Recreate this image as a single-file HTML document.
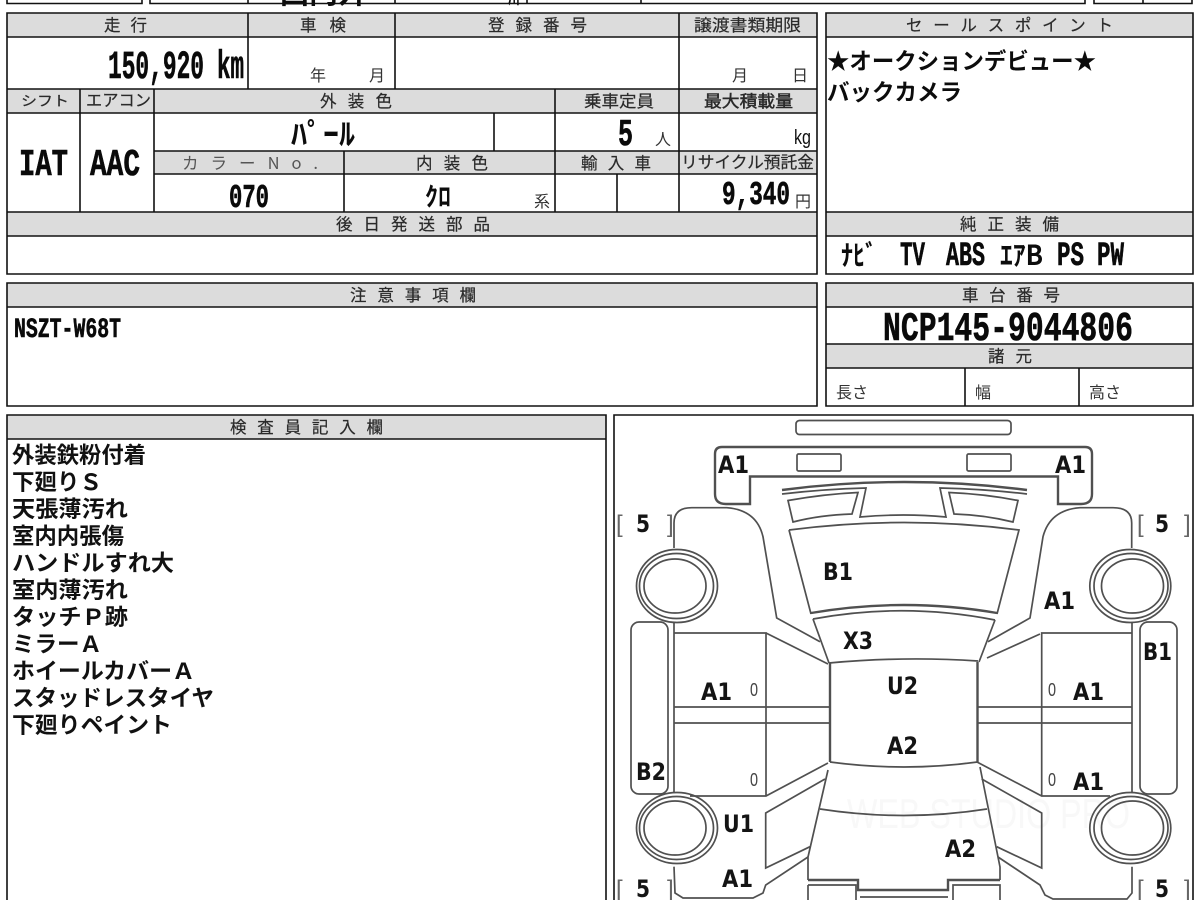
<!DOCTYPE html>
<html lang="ja">
<head>
<meta charset="utf-8">
<title>車両検査票</title>
<style>
html,body{margin:0;padding:0;background:#fff;width:1200px;height:900px;overflow:hidden}
svg{display:block;position:absolute;left:0;top:0;filter:blur(0.3px)}
text{font-family:"Liberation Sans","Noto Sans CJK JP",sans-serif;fill:#111}
.h{font-size:16.5px;fill:#2a2a2a;stroke:#2a2a2a;stroke-width:.2px;font-family:"Noto Sans CJK JP","Liberation Sans",sans-serif}
.t{font-size:16px;fill:#333;font-family:"Noto Sans CJK JP","Liberation Sans",sans-serif}
.b{font-family:"Liberation Mono","Liberation Sans",monospace;font-weight:700;fill:#0a0a0a;stroke:#0a0a0a;stroke-width:.6px}
.j{font-family:"Noto Sans CJK JP","Liberation Sans",sans-serif;font-weight:700;fill:#0c0c0c}
.l{font-family:"DejaVu Sans","Liberation Sans",sans-serif;font-size:24px;font-weight:700;fill:#141414}
.n{font-family:"DejaVu Sans","Liberation Sans",sans-serif;font-size:24px;font-weight:700;fill:#141414}
.z{font-size:18px;fill:#444}
.br{font-size:24px;fill:#666}
.li{font-size:22.5px;font-family:"Noto Sans CJK JP","Liberation Sans",sans-serif;font-weight:700;fill:#111}
.g{fill:#dcdcdc}
.k{fill:none;stroke:#111;stroke-width:1.6}
.d{fill:none;stroke:#505050;stroke-width:1.7}
.d2{fill:none;stroke:#505050;stroke-width:2.4}
</style>
</head>
<body>
<svg width="1200" height="900" viewBox="0 0 1200 900" xmlns="http://www.w3.org/2000/svg">
<!-- grey header bands -->
<rect class="g" x="7" y="13" width="810" height="24"/>
<rect class="g" x="7" y="89" width="810" height="24"/>
<rect class="g" x="154" y="151" width="663" height="23"/>
<rect class="g" x="7" y="212" width="810" height="24"/>
<rect class="g" x="826" y="13" width="367" height="24"/>
<rect class="g" x="826" y="212" width="367" height="24"/>
<rect class="g" x="7" y="283" width="810" height="24"/>
<rect class="g" x="826" y="283" width="367" height="24"/>
<rect class="g" x="826" y="344" width="367" height="24"/>
<rect class="g" x="7" y="415" width="599" height="24"/>

<!-- clipped top strip -->
<text class="j" x="280" y="3" font-size="34" textLength="87" lengthAdjust="spacingAndGlyphs">国内外</text>
<text class="j" x="508" y="3" font-size="24" textLength="12" lengthAdjust="spacingAndGlyphs">川</text>
<path class="k" d="M7 0V3.5H142V0M150 0V3.5H1085V0M248 0V3.5M395 0V3.5M527 0V3.5M641 0V3.5M1094 0V3.5H1192V0M1143 0V3.5" fill="#fff"/>

<!-- main table lines -->
<path class="k" d="M7 13H817V274H7ZM7 37H817M7 89H817M7 113H817M154 151H817M154 174H817M7 212H817M7 236H817
M248 13V89M395 13V89M679 13V212M80 89V212M154 89V212M555 89V212M494 113V151M344 151V212M617 174V212"/>
<path class="k" d="M826 13H1193V274H826ZM826 37H1193M826 212H1193M826 236H1193"/>
<path class="k" d="M7 283H817V406H7ZM7 307H817"/>
<path class="k" d="M826 283H1193V406H826ZM826 307H1193M826 344H1193M826 368H1193M965 368V406M1079 368V406"/>
<path class="k" d="M7 900V415H606V900M7 439H606"/>
<path class="k" d="M614 900V415H1193V900"/>

<!-- header labels -->
<text class="h" x="104" y="31" textLength="43">走行</text>
<text class="h" x="300" y="31" textLength="46">車検</text>
<text class="h" x="488" y="31" textLength="99">登録番号</text>
<text class="h" x="694" y="31" textLength="107" lengthAdjust="spacingAndGlyphs">譲渡書類期限</text>
<text class="h" x="906" y="31" textLength="207">セールスポイント</text>
<text class="h" x="21" y="106" style="font-size:14px" textLength="48" lengthAdjust="spacingAndGlyphs">シフト</text>
<text class="h" x="86" y="106" textLength="65" lengthAdjust="spacingAndGlyphs">エアコン</text>
<text class="h" x="320" y="107" textLength="72">外装色</text>
<text class="h" x="584" y="107" textLength="70" lengthAdjust="spacingAndGlyphs">乗車定員</text>
<text class="h" x="704" y="107" textLength="89" lengthAdjust="spacingAndGlyphs" style="stroke-width:.45px">最大積載量</text>
<text class="h" x="182" y="169" textLength="136" style="fill:#555;stroke:none">カラーNo.</text>
<text class="h" x="416" y="169" textLength="72">内装色</text>
<text class="h" x="581" y="169" textLength="70">輸入車</text>
<text class="h" x="681" y="168" textLength="133" lengthAdjust="spacingAndGlyphs">リサイクル預託金</text>
<text class="h" x="336" y="230" textLength="154">後日発送部品</text>
<text class="h" x="960" y="230" textLength="99">純正装備</text>
<text class="h" x="350" y="301" textLength="126">注意事項欄</text>
<text class="h" x="962" y="301" textLength="98">車台番号</text>
<text class="h" x="988" y="362" textLength="44">諸元</text>
<text class="h" x="230" y="433" textLength="153">検査員記入欄</text>

<!-- small labels -->
<text class="t" x="310" y="81">年</text>
<text class="t" x="369" y="81">月</text>
<text class="t" x="732" y="81">月</text>
<text class="t" x="792" y="81">日</text>
<text class="t" x="655" y="145">人</text>
<text class="t" x="534" y="207">系</text>
<text class="t" x="795" y="207">円</text>
<text class="t" x="836" y="398">長さ</text>
<text class="t" x="975" y="398">幅</text>
<text class="t" x="1089" y="398">高さ</text>
<text x="794" y="144" font-size="20" fill="#333" textLength="17" lengthAdjust="spacingAndGlyphs">kg</text>

<!-- big values -->
<text class="b" x="108" y="78" font-size="40" textLength="96" lengthAdjust="spacingAndGlyphs">150,920</text>
<text class="b" x="217" y="78" font-size="40" textLength="27" lengthAdjust="spacingAndGlyphs">km</text>
<text class="j" x="291" y="145" font-size="30" textLength="64" lengthAdjust="spacingAndGlyphs">ﾊﾟｰﾙ</text>
<text class="b" x="19" y="175" font-size="38" textLength="49" lengthAdjust="spacingAndGlyphs">IAT</text>
<text class="b" x="90" y="175" font-size="38" textLength="50" lengthAdjust="spacingAndGlyphs">AAC</text>
<text class="b" x="229" y="207" font-size="33" textLength="40" lengthAdjust="spacingAndGlyphs">070</text>
<text class="j" x="425" y="206" font-size="26" textLength="26" lengthAdjust="spacingAndGlyphs">ｸﾛ</text>
<text class="b" x="618" y="145" font-size="38" textLength="15" lengthAdjust="spacingAndGlyphs">5</text>
<text class="b" x="722" y="204" font-size="33" textLength="68" lengthAdjust="spacingAndGlyphs">9,340</text>
<text class="j" x="827" y="69" font-size="23" textLength="269" lengthAdjust="spacingAndGlyphs">★オークションデビュー★</text>
<text class="j" x="827" y="100" font-size="23" textLength="135" lengthAdjust="spacingAndGlyphs">バックカメラ</text>
<text class="j" x="841" y="265" font-size="28" textLength="36" lengthAdjust="spacingAndGlyphs">ﾅﾋﾞ</text>
<text class="b" x="900" y="265" font-size="34" textLength="25" lengthAdjust="spacingAndGlyphs">TV</text>
<text class="b" x="946" y="265" font-size="34" textLength="39" lengthAdjust="spacingAndGlyphs">ABS</text>
<text class="j" x="1000" y="265" font-size="28" textLength="43" lengthAdjust="spacingAndGlyphs">ｴｱB</text>
<text class="b" x="1057" y="265" font-size="34" textLength="27" lengthAdjust="spacingAndGlyphs">PS</text>
<text class="b" x="1097" y="265" font-size="34" textLength="27" lengthAdjust="spacingAndGlyphs">PW</text>
<text class="b" x="14" y="337" font-size="28" textLength="107" lengthAdjust="spacingAndGlyphs">NSZT-W68T</text>
<text class="b" x="883" y="340" font-size="41" textLength="250" lengthAdjust="spacingAndGlyphs">NCP145-9044806</text>

<!-- inspector notes -->
<text class="li" x="12" y="463" textLength="134" lengthAdjust="spacingAndGlyphs">外装鉄粉付着</text>
<text class="li" x="12" y="490" textLength="90" lengthAdjust="spacingAndGlyphs">下廻りＳ</text>
<text class="li" x="12" y="517" textLength="116" lengthAdjust="spacingAndGlyphs">天張薄汚れ</text>
<text class="li" x="12" y="544" textLength="112" lengthAdjust="spacingAndGlyphs">室内内張傷</text>
<text class="li" x="12" y="571" textLength="162" lengthAdjust="spacingAndGlyphs">ハンドルすれ大</text>
<text class="li" x="12" y="598" textLength="116" lengthAdjust="spacingAndGlyphs">室内薄汚れ</text>
<text class="li" x="12" y="625" textLength="116" lengthAdjust="spacingAndGlyphs">タッチＰ跡</text>
<text class="li" x="12" y="652" textLength="90" lengthAdjust="spacingAndGlyphs">ミラーＡ</text>
<text class="li" x="12" y="679" textLength="183" lengthAdjust="spacingAndGlyphs">ホイールカバーＡ</text>
<text class="li" x="12" y="706" textLength="202" lengthAdjust="spacingAndGlyphs">スタッドレスタイヤ</text>
<text class="li" x="12" y="733" textLength="160" lengthAdjust="spacingAndGlyphs">下廻りペイント</text>

<!-- watermark -->
<text x="847" y="828" font-size="42" style="fill:#f8f8f8" textLength="283" lengthAdjust="spacingAndGlyphs">WEB STUDIO PRO</text>

<!-- car diagram -->
<rect class="d" x="796" y="420.5" width="215" height="14" rx="3.5"/>
<path class="d2" d="M750 504H726Q715 504 715 494V454Q715 447 722 447H1085Q1092 447 1092 454V494Q1092 504 1081 504H1058V476.5H750Z"/>
<rect class="d" x="797" y="454" width="44" height="17" rx="1.5"/>
<rect class="d" x="967" y="454" width="44" height="17" rx="1.5"/>
<path class="d2" d="M782 490Q904 474 1027 490"/>
<path class="d" d="M782 494Q825 489 866 488L860 517Q904 513 946 517L940 488Q985 489 1027 494"/>
<path class="d" d="M788 500.5Q825 494 858 492.5L852 514Q820 515 793 522Z"/>
<path class="d" d="M949 492.5Q985 494 1018 500.5L1013 522Q985 515 954 514Z"/>
<path class="d" d="M789 530Q904 515 1019 530L997 614"/>
<path class="d" d="M789 530L811 614"/>
<path class="d2" d="M811 613Q904 597 997 613"/>
<path class="d" d="M813 619Q904 602 995 620"/>
<path class="d" d="M813 619L829 663M995 620L979 662"/>
<path class="d" d="M829 663Q904 656 978 661"/>
<path class="d2" d="M830 663V762M977.5 662V762"/>
<path class="d" d="M830 762Q904 772 977.5 762"/>
<path class="d" d="M828 770L808 857V880M980 767L1000 867V880"/>
<path class="d" d="M820 809Q904 822 987 809"/>
<path class="d2" d="M808 880H858V890H948V880H1000"/>
<path class="d" d="M808 885H856V900M860 897H948M953 900V885H1000V900M808 885V900"/>
<path class="d" d="M674 548V523Q674 507.7 691.7 507.7H726.7Q756.7 510 763 536.7L776.7 618L820 641.7"/>
<path class="d" d="M1131.7 548V523Q1131.7 507.7 1113 507.7H1080Q1050 510 1043 536.7L1030 618L988 641.7"/>
<ellipse class="d" cx="677" cy="586" rx="40.5" ry="36.5"/>
<ellipse class="d" cx="676.5" cy="586" rx="37" ry="32.5"/>
<ellipse class="d" cx="675" cy="586" rx="31" ry="27"/>
<ellipse class="d" cx="1130.3" cy="586" rx="40.5" ry="36.5"/>
<ellipse class="d" cx="1131" cy="586" rx="37" ry="32.5"/>
<ellipse class="d" cx="1132.5" cy="586" rx="31" ry="27"/>
<ellipse class="d" cx="677" cy="828" rx="40.5" ry="35.5"/>
<ellipse class="d" cx="676.5" cy="828" rx="37" ry="31.5"/>
<ellipse class="d" cx="675" cy="828" rx="31" ry="27"/>
<ellipse class="d" cx="1130.3" cy="828" rx="40.5" ry="35.5"/>
<ellipse class="d" cx="1131" cy="828" rx="37" ry="31.5"/>
<ellipse class="d" cx="1132.5" cy="828" rx="31" ry="27"/>
<rect class="d" x="631" y="622" width="37" height="172" rx="8"/>
<rect class="d" x="1140" y="622" width="37" height="172" rx="8"/>
<path class="d" d="M674 623V792M674 633H766V796M766 633L828 664M674 707H830M674 723H830M690 796H766L828 763"/>
<path class="d" d="M1132 623V792M1132 633H1041.7V796M1040 634L987 658M977 707H1132M977 723H1132M1110 796H1041.7L977 762"/>
<path class="d" d="M825 779L765.7 813V868L810 846.7"/>
<path class="d" d="M981.7 779L1041.7 813V868L996.7 846.7"/>
<path class="d" d="M808 857L765.7 885L763 893L753 898H683L675 893L674 866.7"/>
<path class="d" d="M998 857L1040 885L1045 895L1053 899H1127L1132 893V866.7"/>

<!-- diagram labels -->
<text class="l" x="718" y="473" textLength="31" lengthAdjust="spacingAndGlyphs">A1</text>
<text class="l" x="1055" y="473" textLength="31" lengthAdjust="spacingAndGlyphs">A1</text>
<text class="br" x="616" y="532">[</text><text class="n" x="636" y="532" textLength="14" lengthAdjust="spacingAndGlyphs">5</text><text class="br" x="667" y="532">]</text>
<text class="br" x="1137" y="532">[</text><text class="n" x="1155" y="532" textLength="14" lengthAdjust="spacingAndGlyphs">5</text><text class="br" x="1184" y="532">]</text>
<text class="br" x="616" y="897">[</text><text class="n" x="636" y="897" textLength="14" lengthAdjust="spacingAndGlyphs">5</text><text class="br" x="667" y="897">]</text>
<text class="br" x="1137" y="897">[</text><text class="n" x="1155" y="897" textLength="14" lengthAdjust="spacingAndGlyphs">5</text><text class="br" x="1184" y="897">]</text>
<text class="l" x="823" y="580" textLength="30" lengthAdjust="spacingAndGlyphs">B1</text>
<text class="l" x="843" y="649" textLength="30" lengthAdjust="spacingAndGlyphs">X3</text>
<text class="l" x="1044" y="609" textLength="31" lengthAdjust="spacingAndGlyphs">A1</text>
<text class="l" x="1143" y="660" textLength="29" lengthAdjust="spacingAndGlyphs">B1</text>
<text class="l" x="887" y="694" textLength="31" lengthAdjust="spacingAndGlyphs">U2</text>
<text class="l" x="887" y="754" textLength="31" lengthAdjust="spacingAndGlyphs">A2</text>
<text class="l" x="701" y="700" textLength="31" lengthAdjust="spacingAndGlyphs">A1</text>
<text class="l" x="1073" y="700" textLength="31" lengthAdjust="spacingAndGlyphs">A1</text>
<text class="l" x="1073" y="790" textLength="31" lengthAdjust="spacingAndGlyphs">A1</text>
<text class="l" x="636" y="780" textLength="30" lengthAdjust="spacingAndGlyphs">B2</text>
<text class="l" x="723" y="832" textLength="31" lengthAdjust="spacingAndGlyphs">U1</text>
<text class="l" x="722" y="887" textLength="31" lengthAdjust="spacingAndGlyphs">A1</text>
<text class="l" x="945" y="857" textLength="31" lengthAdjust="spacingAndGlyphs">A2</text>
<text class="z" x="750" y="696" textLength="8" lengthAdjust="spacingAndGlyphs">0</text>
<text class="z" x="750" y="786" textLength="8" lengthAdjust="spacingAndGlyphs">0</text>
<text class="z" x="1048" y="696" textLength="8" lengthAdjust="spacingAndGlyphs">0</text>
<text class="z" x="1048" y="786" textLength="8" lengthAdjust="spacingAndGlyphs">0</text>
</svg>
</body>
</html>
